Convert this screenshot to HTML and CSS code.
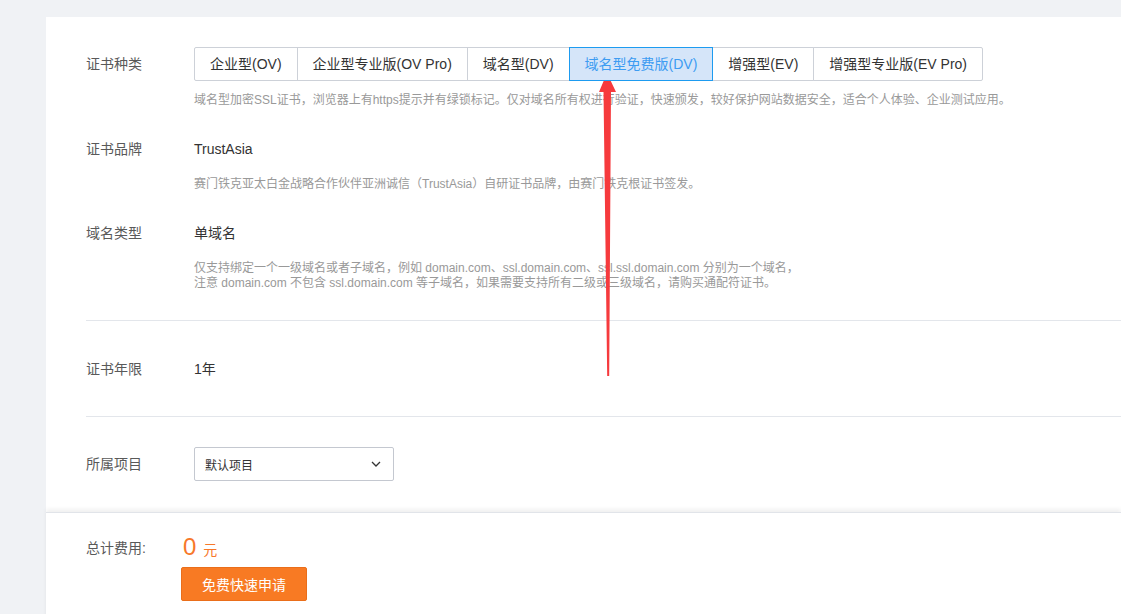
FILE: index.html
```html
<!DOCTYPE html>
<html lang="zh-CN">
<head>
<meta charset="utf-8">
<title>SSL证书</title>
<link rel="stylesheet" href="styles.css">
</head>
<body>
<div class="page">
  <div class="panel">
    <div class="field field-type">
      <div class="label label-tall">证书种类</div>
      <div class="body">
        <div class="tabs">
          <div class="tab">企业型(OV)</div>
          <div class="tab">企业型专业版(OV Pro)</div>
          <div class="tab">域名型(DV)</div>
          <div class="tab active">域名型免费版(DV)</div>
          <div class="tab">增强型(EV)</div>
          <div class="tab">增强型专业版(EV Pro)</div>
        </div>
        <p class="desc desc-first">域名型加密SSL证书，浏览器上有https提示并有绿锁标记。仅对域名所有权进行验证，快速颁发，较好保护网站数据安全，适合个人体验、企业测试应用。</p>
      </div>
    </div>

    <div class="field field-gap">
      <div class="label">证书品牌</div>
      <div class="body">
        <div class="value">TrustAsia</div>
        <p class="desc desc-brand">赛门铁克亚太白金战略合作伙伴亚洲诚信（TrustAsia）自研证书品牌，由赛门铁克根证书签发。</p>
      </div>
    </div>

    <div class="field field-gap">
      <div class="label">域名类型</div>
      <div class="body">
        <div class="value">单域名</div>
        <p class="desc desc-domain">仅支持绑定一个一级域名或者子域名，例如 domain.com、ssl.domain.com、ssl.ssl.domain.com 分别为一个域名，<br>注意 domain.com 不包含 ssl.domain.com 等子域名，如果需要支持所有二级或三级域名，请购买通配符证书。</p>
      </div>
    </div>

    <div class="divider divider-1"></div>

    <div class="field field-years">
      <div class="label">证书年限</div>
      <div class="body">
        <div class="value">1年</div>
      </div>
    </div>

    <div class="divider divider-2"></div>

    <div class="field field-project">
      <div class="label label-tall">所属项目</div>
      <div class="body">
        <div class="select">
          <span>默认项目</span>
          <svg class="chevron" width="10" height="6" viewBox="0 0 10 6"><path d="M1 1 L5 5 L9 1" fill="none" stroke="#333" stroke-width="1.3"/></svg>
        </div>
      </div>
    </div>
  </div>

  <div class="footer">
    <div class="total">
      <div class="total-label">总计费用:</div>
      <div class="total-value"><span class="num">0</span><span class="unit">元</span></div>
    </div>
    <div class="actions">
      <button class="btn">免费快速申请</button>
    </div>
  </div>
</div>

<svg class="arrow" width="1121" height="614" viewBox="0 0 1121 614">
  <polygon points="607,73 616,92 611,92 609.2,376 607.2,376 603.5,92 599,92" fill="#f63a3d"/>
</svg>
</body>
</html>
```

FILE: styles.css
```css
html, body {
  margin: 0;
  padding: 0;
  height: 614px;
  overflow: hidden;
}

body {
  background: #f0f2f5;
  font-family: "Liberation Sans", "Noto Sans CJK SC", sans-serif;
  color: #333;
  font-size: 14px;
  position: relative;
}

.page {
  padding: 17px 0 0 46px;
}

.panel {
  background: #fff;
  padding: 30px 0 31px 40px;
}

.field {
  display: flex;
  align-items: flex-start;
}

.label {
  width: 108px;
  flex: none;
  font-size: 14px;
  line-height: 20px;
  color: #595959;
}

.label-tall {
  line-height: 34px;
}

.body {
  flex: 1;
}

.value {
  font-size: 14px;
  line-height: 20px;
  color: #333;
}

.desc {
  margin: 0;
  font-size: 12px;
  color: #999;
  line-height: 18px;
  white-space: nowrap;
}

.desc-first {
  margin-top: 10px;
}

.desc-brand {
  margin-top: 16px;
}

.desc-domain {
  margin-top: 18px;
  line-height: 15px;
}

.field-gap {
  margin-top: 30px;
}

.tabs {
  display: flex;
}

.tab {
  height: 32px;
  line-height: 32px;
  padding: 0 15px;
  border: 1px solid #cdd1d8;
  margin-left: -1px;
  background: #fff;
  color: #333;
  font-size: 14px;
  white-space: nowrap;
}

.tab:first-child {
  margin-left: 0;
  border-radius: 2px 0 0 2px;
}

.tab:last-child {
  border-radius: 0 2px 2px 0;
}

.tab.active {
  position: relative;
  z-index: 1;
  border-color: #1d9bf0;
  background: #d5e5f9;
  color: #3d9cf2;
}

.divider {
  height: 1px;
  background: #e3e6eb;
}

.divider-1 {
  margin-top: 29px;
}

.field-years {
  margin-top: 38px;
}

.divider-2 {
  margin-top: 37px;
}

.field-project {
  margin-top: 30px;
}

.select {
  width: 200px;
  height: 34px;
  box-sizing: border-box;
  border: 1px solid #c4c8d0;
  border-radius: 2px;
  display: flex;
  align-items: center;
  justify-content: space-between;
  padding: 0 12px 0 10px;
  font-size: 12px;
  color: #333;
}

.chevron {
  display: block;
}

.footer {
  background: #fff;
  border-top: 1px solid #e1e4e9;
  box-shadow: 0 -3px 4px rgba(0, 0, 0, 0.06);
  padding: 20px 0 30px 40px;
  position: relative;
}

.total {
  display: flex;
  align-items: center;
  height: 28px;
}

.total-label {
  width: 97px;
  font-size: 14px;
  color: #595959;
}

.total-value {
  display: flex;
  align-items: baseline;
  color: #f7782a;
}

.num {
  font-size: 24px;
  line-height: 28px;
  font-weight: 300;
}

.unit {
  font-size: 14px;
  margin-left: 7px;
}

.actions {
  margin-top: 6px;
  padding-left: 95px;
}

.btn {
  width: 126px;
  height: 34px;
  border: 1px solid #ea6e1a;
  border-radius: 2px;
  background: #f87a23;
  color: #fff;
  font-family: "Liberation Sans", "Noto Sans CJK SC", sans-serif;
  font-size: 14px;
  padding: 0;
  display: block;
}

.arrow {
  position: absolute;
  left: 0;
  top: 0;
  pointer-events: none;
}
```
